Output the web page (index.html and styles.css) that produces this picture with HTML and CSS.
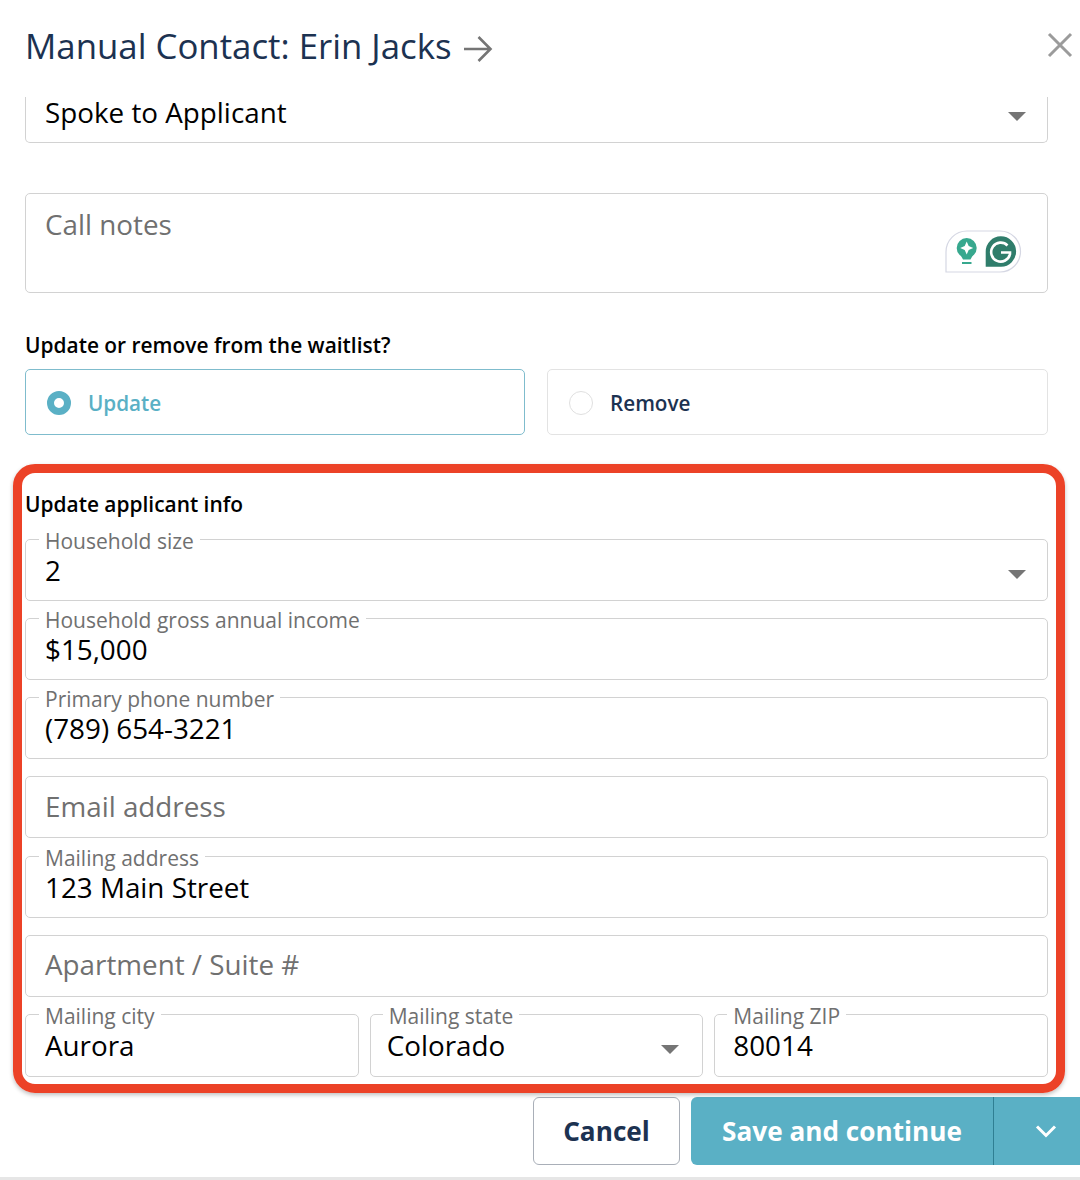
FILE: index.html
```html
<!DOCTYPE html>
<html lang="en">
<head>
<meta charset="utf-8">
<title>Manual Contact</title>
<link rel="stylesheet" href="styles.css">
</head>
<body>
<main class="dialog">
  <header class="head">
    <h1 class="title">Manual Contact: Erin Jacks</h1>
    <svg class="arrow" width="30" height="28" viewBox="0 0 30 28"><path d="M1 14H27M15.500 2L27.500 14L15.500 26" fill="none" stroke="#757575" stroke-width="2.600"/></svg>
    <svg class="close" width="26" height="26" viewBox="0 0 26 26"><path d="M2 2L24 24M24 2L2 24" fill="none" stroke="#9b9b9b" stroke-width="3"/></svg>
  </header>
  <div class="body">
    <div class="box cut"><span class="value">Spoke to Applicant</span><i class="caret"></i></div>
    <div class="box notes">
      <span class="ph">Call notes</span>
      <svg class="gram" width="78" height="45" viewBox="0 0 78 45">
        <path d="M2 43V23A21 21 0 0 1 23 2H56A20.500 20.500 0 0 1 56 43Z" fill="#fff" stroke="#d5d7e3" stroke-width="1.200"/>
        <circle cx="22.700" cy="19" r="10" fill="#37a88e"/>
        <path d="M16 25L19 30.500H26.500L29.500 25Z" fill="#37a88e"/>
        <path d="M18 34H27.500" stroke="#37a88e" stroke-width="2"/>
        <path d="M22.700 12.500L24.700 17L29.200 19L24.700 21L22.700 25.500L20.700 21L16.200 19L20.700 17Z" fill="#fff"/>
        <path d="M41.700 37.700V22.700A15.200 15.200 0 1 1 57 37.700Z" fill="#2f7d6b"/>
        <path d="M63.500 16.500A9.500 9.500 0 1 0 66 25V23.500H57" fill="none" stroke="#fff" stroke-width="2.600"/>
      </svg>
    </div>
    <p class="q">Update or remove from the waitlist?</p>
    <div class="choices">
      <label class="choice on"><i class="radio"></i>Update</label>
      <label class="choice"><i class="radio"></i>Remove</label>
    </div>
    <section class="info">
      <div class="mark"></div>
      <h2 class="q info-h">Update applicant info</h2>
      <div class="fields">
        <fieldset class="fld"><legend>Household size</legend><span class="value">2</span><i class="caret"></i></fieldset>
        <fieldset class="fld"><legend>Household gross annual income</legend><span class="value">$15,000</span></fieldset>
        <fieldset class="fld"><legend>Primary phone number</legend><span class="value">(789) 654-3221</span></fieldset>
        <div class="box empty"><span class="ph">Email address</span></div>
        <fieldset class="fld"><legend>Mailing address</legend><span class="value">123 Main Street</span></fieldset>
        <div class="box empty"><span class="ph">Apartment / Suite #</span></div>
        <div class="trio">
          <fieldset class="fld"><legend>Mailing city</legend><span class="value">Aurora</span></fieldset>
          <fieldset class="fld state"><legend>Mailing state</legend><span class="value">Colorado</span><i class="caret"></i></fieldset>
          <fieldset class="fld zip"><legend>Mailing ZIP</legend><span class="value">80014</span></fieldset>
        </div>
      </div>
    </section>
  </div>
  <footer class="foot">
    <button class="btn cancel" type="button">Cancel</button>
    <div class="save">
      <button class="btn primary" type="button">Save and continue</button>
      <button class="btn more" type="button" aria-label="More"><svg width="22" height="14" viewBox="0 0 22 14"><path d="M2 2.500L11 11.500L20 2.500" fill="none" stroke="#fff" stroke-width="3"/></svg></button>
    </div>
  </footer>
</main>
</body>
</html>
```
FILE: styles.css
```css
* { box-sizing: border-box; }
html, body { margin: 0; height: 1180px; overflow: hidden; background: #fff; }
body { font-family: "Open Sans", "Noto Sans", sans-serif; color: #000; }
.dialog { width: 1080px; height: 1180px; display: flex; flex-direction: column; border-bottom: 3px solid #e6e6e6; }

.head { height: 97px; display: flex; align-items: center; padding: 0 7px 4px 25px; flex: none; }
.title { margin: 0; font-size: 34.800px; font-weight: 400; color: #1c3251; white-space: nowrap; line-height: 1; }
.arrow { margin: 4px 0 0 11px; }
.close { margin: -4px 0 0 auto; }

.body { padding: 0 32px 0 25px; flex: none; }
.box { border: 1px solid #d2d2d2; border-radius: 5px; position: relative; display: flex; align-items: center; padding: 0 19px; }
.cut { height: 46px; border-top: 0; border-top-left-radius: 0; border-top-right-radius: 0; padding-bottom: 16px; }
.value { font-size: 27.800px; line-height: 34px; color: #000; }
.ph { font-size: 27.800px; line-height: 34px; color: #707070; }
.caret { position: absolute; right: 21px; top: 15px; width: 0; height: 0; border-left: 9px solid transparent; border-right: 9px solid transparent; border-top: 9px solid #757575; }

.notes { height: 100px; margin-top: 50px; align-items: flex-start; padding-top: 13px; }
.gram { position: absolute; right: 25px; top: 35px; }

.q { margin: 38px 0 0; font-size: 20.900px; line-height: 28px; font-weight: 600; color: #000; }
.choices { display: grid; grid-template-columns: 500px 501px; gap: 22px; margin-top: 10px; }
.choice { height: 66px; border: 1px solid #e3e3e3; border-radius: 5px; display: flex; align-items: center; gap: 17px; padding: 1px 0 0 21px; font-size: 20.700px; font-weight: 600; color: #1c3251; }
.radio { width: 24px; height: 24px; border: 1px solid #e0e0e0; border-radius: 50%; background: #fff; }
.on { border-color: #7fbccd; color: #5ab0c5; }
.on .radio { border: 7px solid #5ab0c5; }

.info { position: relative; margin-top: 38px; }
.mark { position: absolute; left: -12px; right: -17px; top: -9px; bottom: -16px; border: 9px solid #ec4227; border-radius: 22px; box-shadow: 0 2px 4px rgba(0, 0, 0, .25); pointer-events: none; }
.info-h { margin: 0; padding-top: 17px; height: 66px; }
.fields { display: flex; flex-direction: column; gap: 17.170px; }
.fld { position: relative; margin: 0; padding: 0 0 0 19px; height: 62px; border: 1px solid #d2d2d2; border-radius: 5px; min-width: 0; }
.fld legend { margin-left: -6px; padding: 0 6px; font-size: 21px; line-height: 5px; height: 1px; color: #707070; white-space: nowrap; }
.fld .value { display: block; margin-top: 13px; }
.fld .caret { top: 30px; }
.empty { height: 62px; padding-bottom: 3px; }
.trio { display: grid; grid-template-columns: repeat(3, 1fr); gap: 11px; }
.trio .fld { height: 63px; }
.state { padding-left: 16px; }
.state legend { margin-left: -4px; }
.fld.state .caret { right: 23px; }
.zip { padding-left: 18px; }

.foot { display: flex; justify-content: flex-end; gap: 11px; margin-top: 20px; overflow: hidden; }
.btn { font-family: inherit; font-size: 26.200px; font-weight: 700; height: 68px; border-radius: 6px; cursor: pointer; }
.cancel { width: 147px; background: #fff; border: 1px solid #a9afb8; color: #1c3251; }
.save { display: flex; width: 389px; }
.primary { width: 303px; background: #5ab0c5; color: #fff; border: 0; border-right: 1px solid #2f7f93; border-radius: 6px 0 0 6px; }
.more { width: 86px; background: #5ab0c5; border: 0; border-radius: 0; display: flex; align-items: center; justify-content: center; padding: 0 0 0 18px; }
```
